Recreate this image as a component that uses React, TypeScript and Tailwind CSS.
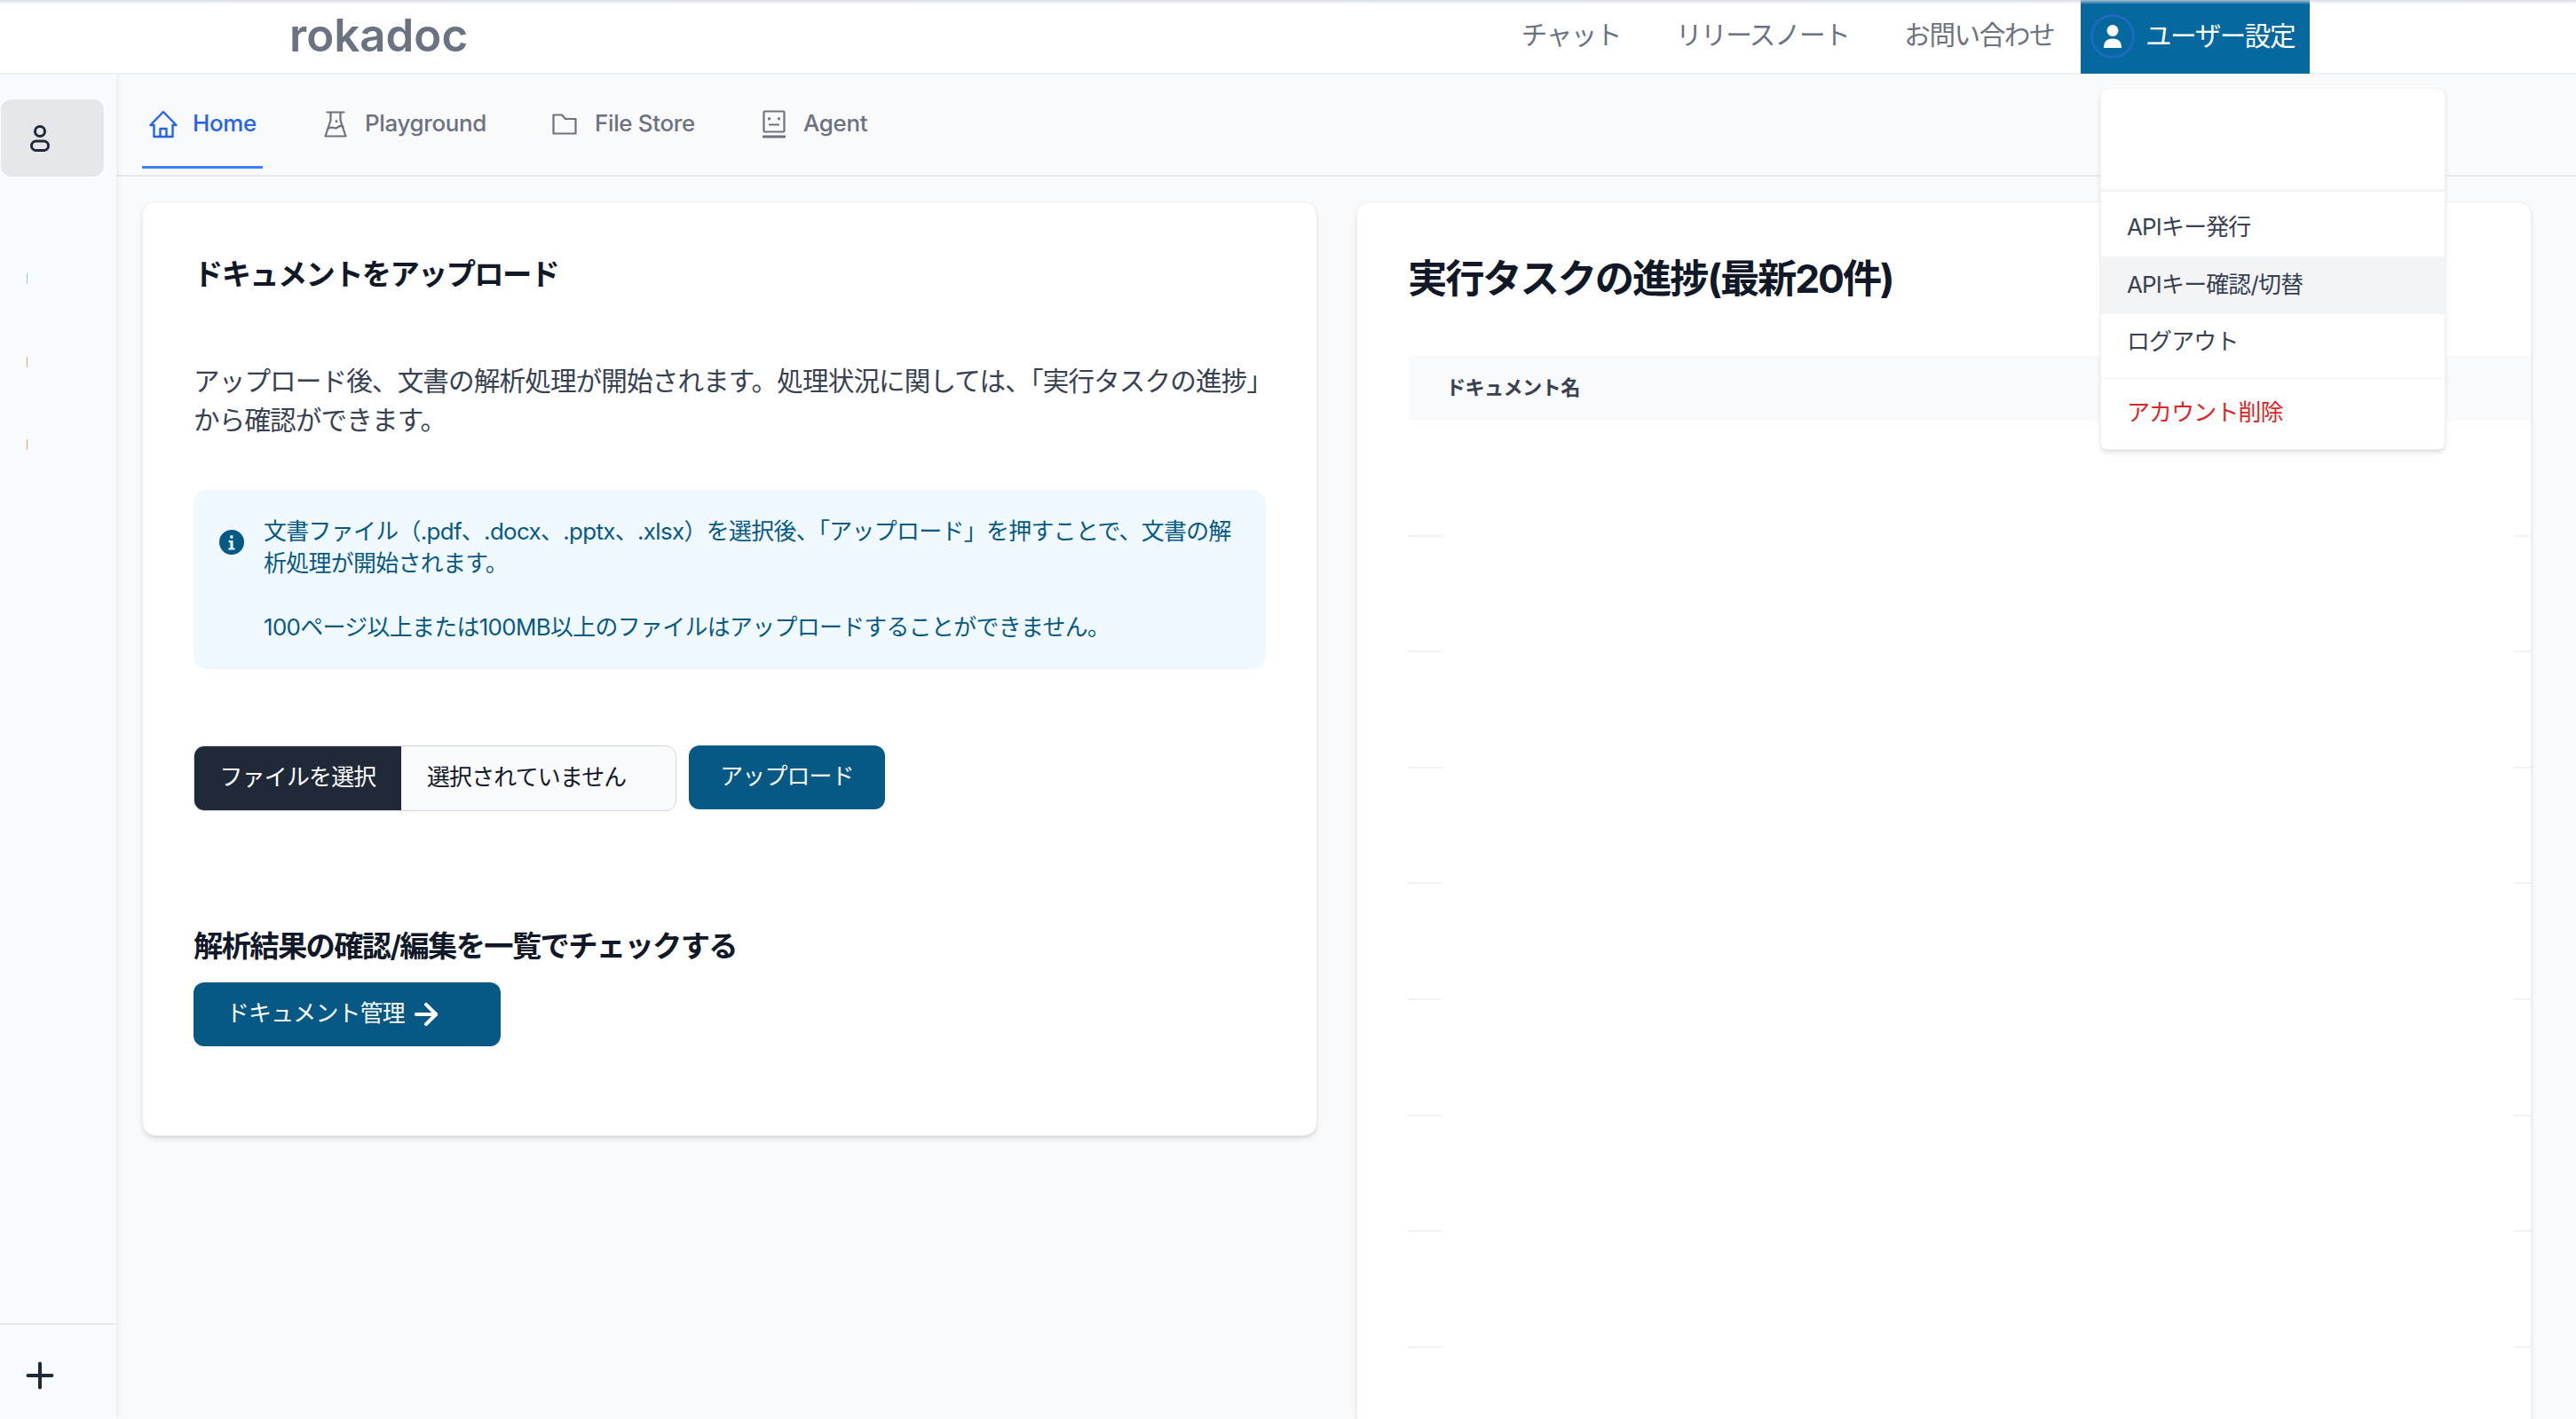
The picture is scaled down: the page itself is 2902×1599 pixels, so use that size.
import { ArrowRight, Plus } from 'lucide-react';

const FONT = "font-['Inter','Noto_Sans_CJK_JP',sans-serif]";

function HomeIcon() {
  return (
    <svg viewBox="0 0 32 32" className="ml-[1px] h-[32px] w-[32px]" fill="none" stroke="currentColor" strokeWidth="2.4" strokeLinejoin="round" strokeLinecap="round">
      <path d="M1.500 17 16 2l14.500 15h-4v13H5.500V17z" />
      <path d="M12.500 30v-9h7v9" />
    </svg>
  );
}

function FlaskIcon() {
  return (
    <svg viewBox="0 0 26 30" className="h-[30px] w-[26px]" fill="none" stroke="currentColor" strokeWidth="2.200" strokeLinejoin="round" strokeLinecap="round">
      <path d="M3.500 1.500h19M7.500 1.500v9L1.500 28.500h23l-6-18v-9" />
      <path d="M4.500 20c5-4 7 1 10-1s4-3 7-1" />
      <path d="M14 11.500v.5" strokeWidth="2.600" />
    </svg>
  );
}

function FolderIcon() {
  return (
    <svg viewBox="0 0 28 24" className="h-[24px] w-[28px]" fill="none" stroke="currentColor" strokeWidth="2.200" strokeLinejoin="round">
      <path d="M1.500 1.500h9.500l4 4.500h11.500v16.500h-25z" />
    </svg>
  );
}

function AgentIcon() {
  return (
    <svg viewBox="0 0 26 32" className="h-[32px] w-[26px]" fill="none" stroke="currentColor" strokeWidth="2.200" strokeLinecap="round">
      <rect x="1.500" y="1.500" width="23" height="23" rx="1" />
      <path d="M8 16.500h10" />
      <path d="M7.500 9.500v.5M18.500 9.500v.5" strokeWidth="3" />
      <path d="M1 30h24" strokeWidth="2.800" />
    </svg>
  );
}

function PersonIcon() {
  return (
    <svg viewBox="0 0 22 30" className="h-[30px] w-[22px]" fill="none" stroke="currentColor" strokeWidth="3">
      <circle cx="11" cy="7" r="5.500" />
      <rect x="1.500" y="18" width="19" height="10.500" rx="5.250" />
    </svg>
  );
}

const TABS = [
  { label: 'Home', icon: <HomeIcon />, active: true, spacing: 'mr-[62px] gap-[17px]' },
  { label: 'Playground', icon: <FlaskIcon />, spacing: 'mr-[60px] gap-[20px]' },
  { label: 'File Store', icon: <FolderIcon />, spacing: 'mr-[62px] gap-[20px]' },
  { label: 'Agent', icon: <AgentIcon />, spacing: 'gap-[20px]' },
];

const NAV_ITEMS = ['チャット', 'リリースノート', 'お問い合わせ'];

function Header() {
  return (
    <header className="relative z-20 flex h-[84px] shrink-0 items-stretch border-b-2 border-[#f0f1f3] bg-white">
      <div className="pointer-events-none absolute inset-x-0 top-0 z-10 h-[5px] bg-gradient-to-b from-gray-300/80 to-transparent" />
      <span className="ml-[326px] flex items-center pb-[2px] text-[51px] font-semibold text-[#6b7280]">rokadoc</span>
      <nav className="ml-auto mr-[300px] flex items-stretch gap-[30px] text-[29.6px] tracking-[-0.05em]">
        <div className="flex items-center gap-[62px] pb-[3px] text-[#6b7280]">
          {NAV_ITEMS.map(item => (
            <a key={item}>{item}</a>
          ))}
        </div>
        <div className="relative flex h-[83px] w-[258px] items-center bg-[#05699f] pl-[11px] pb-[2px] text-white">
          <span className="flex h-[50px] w-[50px] items-center justify-center rounded-full border-[3px] border-[#1d6abf]">
            <svg viewBox="0 0 20 26" className="h-[26px] w-[20px]" fill="currentColor">
              <ellipse cx="10" cy="6.500" rx="6.500" ry="6.500" />
              <path d="M0 26c0-7 3-10.500 10-10.500S20 19 20 26z" />
            </svg>
          </span>
          <span className="ml-[12px]">ユーザー設定</span>
        </div>
      </nav>
    </header>
  );
}

function UserMenu() {
  return (
    <div className="absolute left-[2366px] top-[15px] z-30 w-[389px] rounded-[8px] border border-[#f0f1f3] bg-white text-[25.9px] tracking-[-0.03em] text-[#374151] shadow-md">
      <div className="h-[116px] border-b-[3px] border-[#f3f4f6]" />
      <div className="pt-[8px]">
        <div className="flex h-[65px] items-center px-[29px]">APIキー発行</div>
        <div className="flex h-[65px] items-center bg-[#f3f4f6] px-[29px]">APIキー確認/切替</div>
        <div className="flex h-[65px] items-center px-[29px] pb-[2px]">ログアウト</div>
      </div>
      <div className="mt-[7px] flex h-[80px] items-center border-t border-[#f3f4f6] px-[29px] pb-[2px] text-[#dc2626]">アカウント削除</div>
    </div>
  );
}

function Sidebar() {
  return (
    <aside className="relative z-10 flex w-[131px] shrink-0 flex-col bg-[#f8fbff] shadow-[2px_0_6px_rgba(0,0,0,0.06)]">
      <div className="mt-[28px] ml-[1px] flex h-[87px] w-[116px] items-center rounded-[12px] bg-[#e5e7eb] pl-[33px] text-[#1f2937]">
        <PersonIcon />
      </div>
      <div className="ml-[30px] mt-[109px] h-[12px] w-px bg-[#93c5fd]" />
      <div className="ml-[30px] mt-[82px] h-[12px] w-px bg-[#e8a860]" />
      <div className="ml-[30px] mt-[81px] h-[12px] w-px bg-[#e8a860]" />
      <div className="mt-auto flex h-[108px] items-center border-t-2 border-[#e9ebef] pl-[22px] pt-[8px] text-[#1f2937]">
        <Plus size={46} strokeWidth={2.1} />
      </div>
    </aside>
  );
}

function TabBar() {
  return (
    <div className="flex h-[115px] shrink-0 border-b-2 border-[#e9ebef] pl-[29px]">
      {TABS.map(tab => (
        <div
          key={tab.label}
          className={`flex h-[106px] items-center border-b-[3px] px-[7px] pt-[8px] text-[25.9px] font-medium tracking-[-0.012em] ${tab.spacing} ${tab.active ? 'border-[#3b82f6] text-[#2563eb]' : 'border-transparent text-[#6b7280]'}`}
        >
          {tab.icon}
          {tab.label}
        </div>
      ))}
    </div>
  );
}

function UploadCard() {
  return (
    <section className="h-[1053px] w-[1324px] shrink-0 rounded-[15px] border border-[#eceef1] bg-white px-[57px] shadow-md">
      <h2 className="mt-[56px] text-[33.3px] font-semibold leading-[50px] tracking-[-0.05em] text-[#111827]">ドキュメントをアップロード</h2>
      <p className="mt-[73px] text-[29.6px] leading-[44.4px] tracking-[-0.03em] text-[#374151]">
        アップロード後、文書の解析処理が開始されます。処理状況に関しては、「実行タスクの進捗」から確認ができます。
      </p>
      <div className="mt-[56px] flex h-[202px] gap-[22px] rounded-[15px] bg-[#f0f9ff] px-[29px] pt-[29px] text-[25.9px] leading-[36px] tracking-[-0.025em] text-[#075985]">
        <svg viewBox="0 0 20 20" className="mt-[16px] h-[28px] w-[28px] shrink-0" fill="currentColor">
          <path fillRule="evenodd" d="M10 0a10 10 0 1 0 0 20 10 10 0 0 0 0-20zM8.800 4.500h2.200v2.400H8.800zM7.600 8.600h3.500v6h1.400v1.500H7.400v-1.500h1.500v-4.400H7.600z" />
        </svg>
        <div>
          文書ファイル（.pdf、.docx、.pptx、.xlsx）を選択後、「アップロード」を押すことで、文書の解析処理が開始されます。
          <br />
          <br />
          100ページ以上または100MB以上のファイルはアップロードすることができません。
        </div>
      </div>
      <div className="mt-[86px] flex items-start gap-[14px] text-[25.9px] tracking-[-0.03em]">
        <div className="flex h-[74px] w-[544px] overflow-hidden rounded-[12px] border border-[#d1d5db] bg-[#f9fafb] text-[#111827]">
          <span className="flex w-[233px] items-center justify-center bg-[#1f2937] text-white">ファイルを選択</span>
          <span className="flex items-center pl-[29px]">選択されていません</span>
        </div>
        <button className="h-[72px] w-[221px] rounded-[12px] bg-[#075985] text-white">アップロード</button>
      </div>
      <h3 className="mt-[130px] text-[33.3px] font-semibold leading-[44px] tracking-[-0.05em] text-[#111827]">解析結果の確認/編集を一覧でチェックする</h3>
      <button className="mt-[19px] flex h-[72px] w-[346px] items-center gap-[5px] rounded-[12px] bg-[#075985] pl-[37px] text-[25.9px] tracking-[-0.03em] text-white">
        ドキュメント管理
        <ArrowRight size={38} strokeWidth={2.6} />
      </button>
    </section>
  );
}

function TaskCard() {
  return (
    <section className="min-w-0 flex-1 rounded-t-[15px] border border-b-0 border-[#eceef1] bg-white pl-[57px] shadow-md">
      <h2 className="mt-[56px] text-[44.4px] font-bold leading-[60px] tracking-[-0.05em] text-[#111827]">実行タスクの進捗(最新20件)</h2>
      <div className="mt-[57px] flex h-[73px] items-center bg-[#f9fafb] pb-[2px] pl-[43px] text-[22.2px] font-semibold tracking-[-0.03em] text-[#374151]">ドキュメント名</div>
      {[0, 1, 2, 3, 4, 5, 6, 7].map(i => (
        <div key={i} className="flex h-[130.6px] items-end justify-between">
          <div className="w-[39px] border-b-2 border-[#f0f1f3]" />
          <div className="w-[19px] border-b-2 border-[#f0f1f3]" />
        </div>
      ))}
    </section>
  );
}

export default function App() {
  return (
    <div className={`relative flex h-[1599px] w-[2902px] flex-col overflow-hidden bg-[#f9fafb] ${FONT}`}>
      <Header />
      <div className="relative flex min-h-0 flex-1">
        <Sidebar />
        <main className="flex min-w-0 flex-1 flex-col">
          <TabBar />
          <div className="flex min-h-0 flex-1 items-stretch gap-[44px] pl-[29px] pr-[50px] pt-[28px]">
            <UploadCard />
            <TaskCard />
          </div>
        </main>
        <UserMenu />
      </div>
    </div>
  );
}
